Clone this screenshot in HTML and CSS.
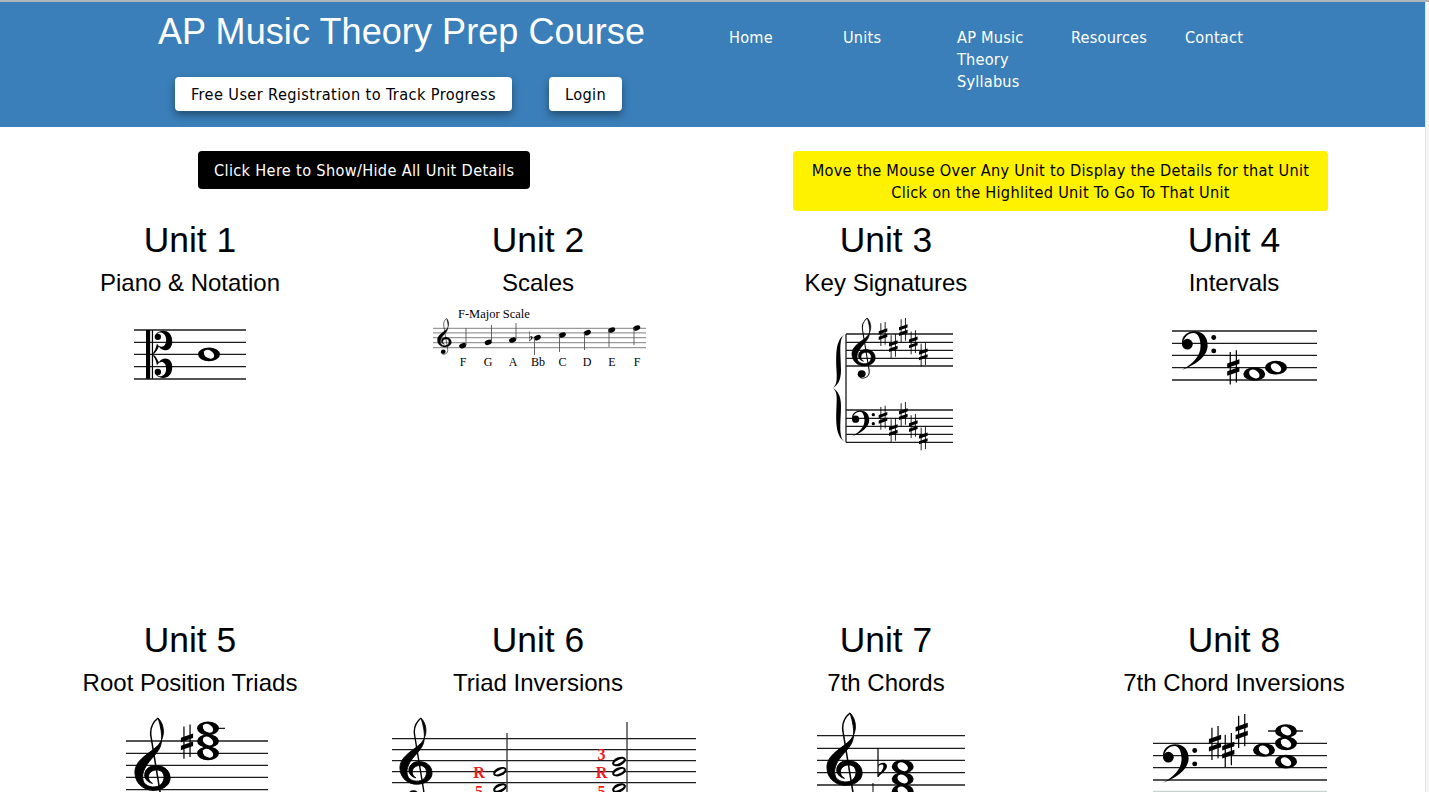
FILE: index.html
```html
<!DOCTYPE html>
<html lang="en">
<head>
<meta charset="utf-8">
<title>AP Music Theory Prep Course</title>
<link rel="stylesheet" href="styles.css">
</head>
<body>
<svg class="defs" width="0" height="0" aria-hidden="true">
  <defs>
    <g id="treble">
      <g transform="scale(1.1,1)">
        <path class="thin" d="M16.5 -15 C12 -11 10.5 -6 11.5 0 L18.5 47 C20 57 8 60 6.5 52"/>
        <circle cx="10.5" cy="51.5" r="4.3"/>
        <path class="bold" d="M16.5 -15 C21 -10 22 -1 17 6 C11 13 -1 18 0 29 C0.5 38 8 42.5 14 42 C21 41.5 26 37 25 31 C24.5 25 19 22 14 22.5 C9 23 6.5 27 7 31 C7.5 34 10 36 12.5 36.5 C10 35 9 32 10 29.5 C11 26.5 15 25 18 26.5 C21 28 22 33 19 37 C16 40.5 9 40 6.5 36 C4 31 6 24 12 17 C16 12 18.5 9 19 3 C19.5 -2 18.5 -8 16.5 -15 Z"/>
      </g>
    </g>
    <g id="bass">
      <circle cx="4.4" cy="10" r="4.4"/>
      <path d="M0.2 10 C-1 4 4 -0.6 10 -0.6 C17 -0.6 21 4 21 11 C21 20 11 27 0 31 C8 26.5 15.5 20 15.2 11 C15 5 13 0.8 9.5 0.8 C5 0.8 1.5 4.5 0.2 10 Z"/>
      <circle cx="26" cy="4.5" r="2"/>
      <circle cx="26" cy="15.5" r="2"/>
    </g>
    <g id="alto">
      <rect x="0" y="0" width="3.4" height="40"/>
      <rect x="4.8" y="0" width="1" height="40"/>
      <g id="alto-half">
        <path d="M8 3.5 C11 -0.5 21 -1.5 21.5 9 C22 17 14 19 10.5 13.5 C9.5 16 8 18.5 6 20 L6 18.5 C8 16 8.5 13 9 11 C11 15 16.5 15 16.5 8 C16.5 2 11 1 9.5 3 Z"/>
        <circle cx="9.7" cy="5.6" r="2.6"/>
      </g>
      <use href="#alto-half" transform="translate(0,40) scale(1,-1)"/>
    </g>
    <g id="sharp">
      <path class="stem" d="M-2.5 -12.5 V14 M2.5 -14 V12.5"/>
      <path d="M-5 -3.2 L5 -6.7 V-3 L-5 0.5 Z M-5 3.3 L5 -0.2 V3.5 L-5 7 Z"/>
    </g>
    <g id="flat">
      <path class="stem" d="M0 -16 V8"/>
      <path d="M0 -2 C3 -5 7.5 -4.5 7.5 -1 C7.5 2 3 5 0 8 V6 C2 4 4.5 2 4.5 -1 C4.5 -3 2 -3 0 -0.5 Z"/>
    </g>
    <g id="whole">
      <ellipse rx="9" ry="5.6"/>
      <ellipse class="hole" rx="4.6" ry="3.2" transform="rotate(32)"/>
    </g>
    <g id="half">
      <ellipse rx="7.2" ry="4.2" transform="rotate(-22)"/>
      <ellipse class="hole" rx="5.2" ry="1.6" transform="rotate(-26)"/>
    </g>
    <g id="quarter">
      <ellipse rx="3.7" ry="2.5" transform="rotate(-22)"/>
    </g>
  </defs>
</svg>

<div class="page">
  <header class="masthead">
    <div class="brand">
      <h1 class="site-title">AP Music Theory Prep Course</h1>
      <div class="actions">
        <a class="btn btn-light">Free User Registration to Track Progress</a>
        <a class="btn btn-light">Login</a>
      </div>
    </div>
    <nav class="nav">
      <a class="nav-item">Home</a>
      <a class="nav-item">Units</a>
      <a class="nav-item">AP Music Theory Syllabus</a>
      <a class="nav-item">Resources</a>
      <a class="nav-item">Contact</a>
    </nav>
  </header>

  <section class="toolbar">
    <div class="toolbar-left"><a class="btn btn-dark">Click Here to Show/Hide All Unit Details</a></div>
    <div class="notice">Move the Mouse Over Any Unit to Display the Details for that Unit<br>Click on the Highlited Unit To Go To That Unit</div>
  </section>

  <main class="units">
    <article class="unit">
      <h2 class="unit-num">Unit 1</h2>
      <h3 class="unit-name">Piano &amp; Notation</h3>
      <svg class="score" viewBox="16 300 348 180">
        <path class="staff" d="M134 330H246M134 342.3H246M134 354.3H246M134 366.7H246M134 379H246"/>
        <use href="#alto" transform="translate(146,330) scale(1.22)"/>
        <use href="#whole" transform="translate(209,354.3) scale(1.22)"/>
      </svg>
    </article>

    <article class="unit">
      <h2 class="unit-num">Unit 2</h2>
      <h3 class="unit-name">Scales</h3>
      <svg class="score" viewBox="364 300 348 180">
        <text class="score-title" x="458" y="318">F-Major Scale</text>
        <path class="staff-soft" d="M433 328.3H646M433 332.8H646M433 337.7H646M433 342.7H646M433 347.7H646"/>
        <use href="#treble" transform="translate(437.5,326) scale(.5)"/>
        <use href="#quarter" transform="translate(462.7,345.7)"/>
        <use href="#quarter" transform="translate(488.3,342.3)"/>
        <use href="#quarter" transform="translate(512.7,340)"/>
        <use href="#quarter" transform="translate(537.3,337.7)"/>
        <use href="#quarter" transform="translate(562.3,335)"/>
        <use href="#quarter" transform="translate(587.3,332.7)"/>
        <use href="#quarter" transform="translate(611.7,330)"/>
        <use href="#quarter" transform="translate(636.7,328)"/>
        <path class="stem-soft" d="M466 345V328M491.5 342V325M516 339V323M534.5 338V355M559.5 335V352M584.5 333V350M609 330V347M634 328V345"/>
        <use href="#flat" transform="translate(529.5,338) scale(.42)"/>
        <text class="score-label" x="463" y="366">F</text>
        <text class="score-label" x="488" y="366">G</text>
        <text class="score-label" x="513" y="366">A</text>
        <text class="score-label" x="538" y="366">Bb</text>
        <text class="score-label" x="562.5" y="366">C</text>
        <text class="score-label" x="587" y="366">D</text>
        <text class="score-label" x="612" y="366">E</text>
        <text class="score-label" x="637" y="366">F</text>
      </svg>
    </article>

    <article class="unit">
      <h2 class="unit-num">Unit 3</h2>
      <h3 class="unit-name">Key Signatures</h3>
      <svg class="score" viewBox="712 300 348 180">
        <path class="staff" d="M846 334H953M846 342.3H953M846 350.3H953M846 358.3H953M846 366H953M846 410H953M846 418.3H953M846 426.3H953M846 434.3H953M846 442.3H953M846 334V442.3"/>
        <path d="M845 334 C838 338 841 355 841 370 C841 380 838 385 833 388 C838 391 841 396 841 406 C841 421 838 438 845 442 C835 436 836 420 836.5 406 C837 396 837 392 833 388 C837 384 837 380 836.5 370 C836 356 835 340 845 334 Z"/>
        <use href="#treble" transform="translate(852,330.6) scale(.84)"/>
        <use href="#sharp" transform="translate(883,334) scale(.86)"/>
        <use href="#sharp" transform="translate(893.3,346) scale(.86)"/>
        <use href="#sharp" transform="translate(903.3,330) scale(.86)"/>
        <use href="#sharp" transform="translate(913.3,342.3) scale(.86)"/>
        <use href="#sharp" transform="translate(923.3,354.3) scale(.86)"/>
        <use href="#bass" transform="translate(852,411) scale(.82)"/>
        <use href="#sharp" transform="translate(883,417.7) scale(.86)"/>
        <use href="#sharp" transform="translate(893.3,430) scale(.86)"/>
        <use href="#sharp" transform="translate(903.3,414) scale(.86)"/>
        <use href="#sharp" transform="translate(913.3,426) scale(.86)"/>
        <use href="#sharp" transform="translate(923.3,438.3) scale(.86)"/>
      </svg>
    </article>

    <article class="unit">
      <h2 class="unit-num">Unit 4</h2>
      <h3 class="unit-name">Intervals</h3>
      <svg class="score" viewBox="1060 300 348 180">
        <path class="staff" d="M1172 331H1317M1172 343.3H1317M1172 355.3H1317M1172 367.7H1317M1172 380H1317"/>
        <use href="#bass" transform="translate(1182,332) scale(1.22)"/>
        <use href="#sharp" transform="translate(1233.3,367.3) scale(1.22)"/>
        <use href="#whole" transform="translate(1254.3,374) scale(1.22)"/>
        <use href="#whole" transform="translate(1276,367.7) scale(1.22)"/>
      </svg>
    </article>

    <article class="unit">
      <h2 class="unit-num">Unit 5</h2>
      <h3 class="unit-name">Root Position Triads</h3>
      <svg class="score" viewBox="16 700 348 180">
        <path class="staff" d="M126 741H268M126 753.3H268M126 765.3H268M126 777.3H268M126 789.7H268M198 728.3H225"/>
        <use href="#treble" transform="translate(135,737) scale(1.27)"/>
        <use href="#sharp" transform="translate(187,741.7) scale(1.22)"/>
        <use href="#whole" transform="translate(208,728.3) scale(1.22)"/>
        <use href="#whole" transform="translate(208,741) scale(1.22)"/>
        <use href="#whole" transform="translate(208,753.3) scale(1.22)"/>
      </svg>
    </article>

    <article class="unit">
      <h2 class="unit-num">Unit 6</h2>
      <h3 class="unit-name">Triad Inversions</h3>
      <svg class="score" viewBox="364 700 348 180">
        <path class="staff" d="M392 738.7H696M392 749.7H696M392 760.7H696M392 771.7H696M392 782.7H696"/>
        <use href="#treble" transform="translate(400,735.5) scale(1.16)"/>
        <use href="#half" transform="translate(500,771.7)"/>
        <use href="#half" transform="translate(500,788)"/>
        <use href="#half" transform="translate(619,761.5)"/>
        <use href="#half" transform="translate(619,771.7)"/>
        <use href="#half" transform="translate(619,788)"/>
        <path class="stem-dark" d="M507 733V800M627 722V800"/>
        <text class="chord-tone" x="479" y="778">R</text>
        <text class="chord-tone" x="479" y="797">5</text>
        <text class="chord-tone" x="601.5" y="760">3</text>
        <text class="chord-tone" x="601.5" y="778">R</text>
        <text class="chord-tone" x="601.5" y="797">5</text>
      </svg>
    </article>

    <article class="unit">
      <h2 class="unit-num">Unit 7</h2>
      <h3 class="unit-name">7th Chords</h3>
      <svg class="score" viewBox="712 700 348 180">
        <path class="staff" d="M817 735.7H965M817 748.3H965M817 760.3H965M817 772.7H965M817 785H965"/>
        <use href="#treble" transform="translate(827,732) scale(1.27)"/>
        <use href="#flat" transform="translate(878,767.5) scale(1.2)"/>
        <path class="stem" d="M873 783V800"/>
        <use href="#whole" transform="translate(902.7,766.7) scale(1.22)"/>
        <use href="#whole" transform="translate(902.7,779) scale(1.22)"/>
        <use href="#whole" transform="translate(902.7,791) scale(1.22)"/>
      </svg>
    </article>

    <article class="unit">
      <h2 class="unit-num">Unit 8</h2>
      <h3 class="unit-name">7th Chord Inversions</h3>
      <svg class="score" viewBox="1060 700 348 180">
        <path class="staff" d="M1153 743.3H1327M1153 755.7H1327M1153 767.7H1327M1153 780H1327M1268 731H1303"/>
        <path class="staff-faint" d="M1153 791.3H1327"/>
        <use href="#bass" transform="translate(1163,745) scale(1.22)"/>
        <use href="#sharp" transform="translate(1215,743) scale(1.22)"/>
        <use href="#sharp" transform="translate(1228.3,750) scale(1.22)"/>
        <use href="#sharp" transform="translate(1241.7,731) scale(1.22)"/>
        <use href="#whole" transform="translate(1264,750) scale(1.22)"/>
        <use href="#whole" transform="translate(1286,731) scale(1.22)"/>
        <use href="#whole" transform="translate(1286,743.3) scale(1.22)"/>
        <use href="#whole" transform="translate(1286,761.7) scale(1.22)"/>
      </svg>
    </article>
  </main>
</div>
</body>
</html>
```

FILE: styles.css
```css
* { box-sizing: border-box; }

html, body {
  margin: 0;
  padding: 0;
  height: 100%;
  overflow: hidden;
}

body {
  font-family: "Liberation Sans", Arial, sans-serif;
  color: #000;
  background: #f6f6f6;
  border-top: 2px solid #aeb4b9;
}

.defs { display: block; width: 0; height: 0; }

.page {
  width: 1425px;
  height: 790px;
  overflow: hidden;
  background: #fff;
  box-shadow: 1px 0 0 #e3e3e3;
}

.masthead {
  display: flex;
  background: #3a7fba;
  height: 125px;
  color: #fff;
}

.brand {
  width: 713px;
  padding: 9px 0 0 158px;
}

.site-title {
  margin: 0;
  font-size: 36px;
  line-height: 41px;
  font-weight: 400;
  letter-spacing: .08px;
  white-space: nowrap;
}

.actions {
  display: flex;
  gap: 37px;
  margin: 25px 0 0 17px;
}

.btn {
  display: inline-block;
  font-family: "DejaVu Sans Condensed", "DejaVu Sans", Verdana, sans-serif;
  font-size: 16.2px;
  line-height: 22px;
  letter-spacing: .39px;
  padding: 7px 16px 5px;
  border-radius: 4px;
  white-space: nowrap;
}

.btn-light {
  background: #fff;
  color: #000;
  box-shadow: 0 4px 8px rgba(0, 0, 0, .4);
}

.btn-dark {
  background: #000;
  color: #fff;
  letter-spacing: .33px;
  padding: 9px 16px 7px;
}

.nav {
  display: flex;
  padding: 25px 0 0 16px;
}

.nav-item {
  width: 114px;
  padding-right: 22px;
  font-family: "DejaVu Sans Condensed", "DejaVu Sans", Verdana, sans-serif;
  font-size: 16.2px;
  line-height: 22px;
  letter-spacing: .2px;
}

.toolbar {
  display: flex;
  height: 93px;
  padding-top: 24px;
}

.toolbar-left {
  width: 793px;
  padding-left: 198px;
}

.notice {
  width: 535px;
  height: 60px;
  padding: 9px 0 7px;
  background: #fff200;
  border-radius: 4px;
  font-family: "DejaVu Sans Condensed", "DejaVu Sans", Verdana, sans-serif;
  font-size: 16.2px;
  line-height: 22px;
  letter-spacing: .27px;
  text-align: center;
}

.units {
  display: grid;
  grid-template-columns: repeat(4, 348px);
  grid-auto-rows: 400px;
  padding-left: 16px;
}

.unit {
  text-align: center;
  height: 400px;
}

.unit-num {
  margin: 0;
  font-size: 35.4px;
  line-height: 40px;
  font-weight: 400;
}

.unit-name {
  margin: 9px 0 0;
  font-size: 24px;
  line-height: 27px;
  font-weight: 400;
  white-space: nowrap;
}

.score {
  display: block;
  width: 348px;
  height: 180px;
  margin-top: 4px;
}

.staff { fill: none; stroke: #1c1c1c; stroke-width: 1.3; }
.staff-soft { fill: none; stroke: #9a9a9a; stroke-width: 1.2; }
.staff-faint { fill: none; stroke: #c9d2cc; stroke-width: 1.3; }
.stem { fill: none; stroke: #000; stroke-width: 1; }
.stem-soft { fill: none; stroke: #555; stroke-width: .9; }
.stem-dark { fill: none; stroke: #333; stroke-width: 1.3; }
.thin { fill: none; stroke: #000; stroke-width: 1.1; }
.bold { stroke: #000; stroke-width: .7; }
.hole { fill: #fff; }

.score-title {
  font-family: "Liberation Serif", "Times New Roman", serif;
  font-size: 12.5px;
}

.score-label {
  font-family: "Liberation Serif", "Times New Roman", serif;
  font-size: 12px;
  text-anchor: middle;
}

.chord-tone {
  font-family: "Liberation Serif", "Times New Roman", serif;
  font-size: 16px;
  font-weight: 700;
  fill: #ee1c25;
  text-anchor: middle;
}
```
